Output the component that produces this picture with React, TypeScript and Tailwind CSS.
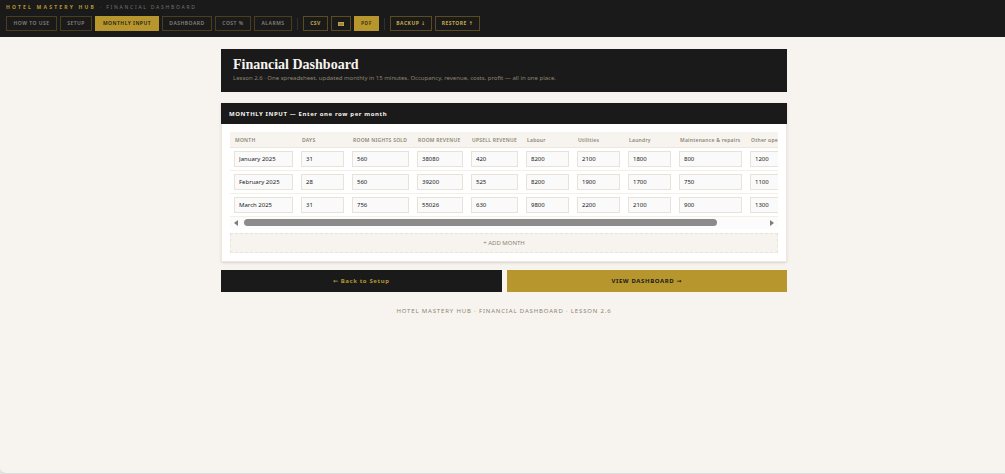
import type { ReactNode } from "react";

type NavButton = {
  label: string;
  width: string;
  active?: boolean;
};

const pages: NavButton[] = [
  { label: "HOW TO USE", width: "w-[51px]" },
  { label: "SETUP", width: "w-8" },
  { label: "MONTHLY INPUT", width: "w-16", active: true },
  { label: "DASHBOARD", width: "w-[50px]" },
  { label: "COST %", width: "w-9" },
  { label: "ALARMS", width: "w-[38px]" }
];

const columns = [
  { key: "month", label: "MONTH", width: "w-[67px]" },
  { key: "days", label: "DAYS", width: "w-[51px]" },
  { key: "nights", label: "ROOM NIGHTS SOLD", width: "w-[65px]" },
  { key: "revenue", label: "ROOM REVENUE", width: "w-[54px]" },
  { key: "upsell", label: "UPSELL REVENUE", width: "w-[55px]" },
  { key: "labour", label: "Labour", width: "w-[51px]" },
  { key: "utilities", label: "Utilities", width: "w-[51px]" },
  { key: "laundry", label: "Laundry", width: "w-[51px]" },
  { key: "maintenance", label: "Maintenance & repairs", width: "w-[71px]" },
  { key: "other", label: "Other operating", width: "w-[71px]" }
];

const rows = [
  ["January 2025", "31", "560", "38080", "420", "8200", "2100", "1800", "800", "1200"],
  ["February 2025", "28", "560", "39200", "525", "8200", "1900", "1700", "750", "1100"],
  ["March 2025", "31", "756", "55026", "630", "9800", "2200", "2100", "900", "1300"]
];

function ToolButton({
  children,
  width,
  filled,
  label
}: {
  children: ReactNode;
  width: string;
  filled?: boolean;
  label?: string;
}) {
  return (
    <button
      aria-label={label}
      className={`flex h-[15px] items-center justify-center border pt-px text-[5px] font-bold tracking-widest whitespace-nowrap ${width} ${
        filled
          ? "border-[#b8962e] bg-[#b8962e] text-[#4a3d16]"
          : "border-[#5b4c20] text-[#c5a74d]"
      }`}
      type="button"
    >
      {children}
    </button>
  );
}

function Divider() {
  return <span className="mx-0.5 h-3 w-px bg-[#303030]" />;
}

function TopBar() {
  return (
    <header className="bg-[#1a1a1a] px-1.5 pt-1 pb-1.5">
      <div className="flex h-2 items-center gap-1 text-[5px]">
        <span className="font-bold tracking-[0.44em] text-[#b8962e]">HOTEL MASTERY HUB</span>
        <span className="tracking-[0.35em] text-[#77736b]">· FINANCIAL DASHBOARD</span>
      </div>
      <nav className="mt-1 flex flex-wrap items-center gap-[3px]">
        {pages.map((page) => (
          <button
            className={`flex h-[15px] items-center justify-center border pt-px text-[5px] font-semibold tracking-widest whitespace-nowrap ${page.width} ${
              page.active
                ? "border-[#b8962e] bg-[#b8962e] text-[#1a1a1a]"
                : "border-[#4a3e1d] text-[#888377]"
            }`}
            key={page.label}
            type="button"
          >
            {page.label}
          </button>
        ))}
        <Divider />
        <ToolButton width="w-[25px]">CSV</ToolButton>
        <ToolButton label="Spreadsheet" width="w-5">
          <svg className="h-1 w-1.5" viewBox="0 0 6 4">
            <path d="M0 0h6v4H0z" fill="#c5a74d" />
            <path d="M0.5 1.3h5M0.5 2.7h5M3 1.3V4" stroke="#6b5a28" strokeWidth="0.4" />
          </svg>
        </ToolButton>
        <ToolButton filled width="w-[25px]">
          PDF
        </ToolButton>
        <Divider />
        <ToolButton width="w-[42px]">BACKUP ↓</ToolButton>
        <ToolButton width="w-[45px]">RESTORE ↑</ToolButton>
      </nav>
    </header>
  );
}

function MonthTable() {
  return (
    <div>
      <div className="overflow-x-auto [scrollbar-width:none]">
        <table className="w-[587px] table-fixed border-collapse">
          <thead>
            <tr className="h-[15px] border-b border-[#ede8de] bg-[#f7f4ef]">
              {columns.map((column) => (
                <th
                  className={`px-[5px] pt-0.5 text-left text-[5px] font-semibold tracking-wider whitespace-nowrap text-[#8c8474] ${column.width}`}
                  key={column.key}
                  scope="col"
                >
                  {column.label}
                </th>
              ))}
            </tr>
          </thead>
          <tbody>
            {rows.map((row) => (
              <tr className="h-[23px] border-b border-[#f3f0ea]" key={row[0]}>
                {row.map((value, index) => (
                  <td className="px-1" key={columns[index].key}>
                    <input
                      aria-label={`${columns[index].label}, ${row[0]}`}
                      className="block h-4 w-full border border-[#e8e3d8] bg-[#fafafa] px-1 pt-px text-[6px] text-[#1a1a1a]"
                      defaultValue={value}
                      type="text"
                    />
                  </td>
                ))}
              </tr>
            ))}
          </tbody>
        </table>
      </div>
      <div className="flex h-3 items-center justify-between bg-[#fcfcfc] px-1">
        <svg className="h-1.5 w-1" viewBox="0 0 4 6">
          <path d="M4 0v6L0 3z" fill="#7d7d7d" />
        </svg>
        <div className="mx-1.5 h-[7px] flex-1">
          <div className="h-full w-[91%] rounded-full bg-[#8b8b8b]" />
        </div>
        <svg className="h-1.5 w-1" viewBox="0 0 4 6">
          <path d="M0 0v6l4-3z" fill="#7d7d7d" />
        </svg>
      </div>
    </div>
  );
}

export default function App() {
  return (
    <div className="bg-[#e4e3e1]">
      <div className="flex min-h-screen flex-col rounded-bl-md border-b border-[#dcdcda] bg-[#f7f4ef] font-['Noto_Sans','DejaVu_Sans',sans-serif] text-[#1a1a1a]">
        <TopBar />
        <main className="w-full pt-3 pl-[3px]">
          <div className="mx-auto max-w-[566px]">
            <section className="bg-[#1a1a1a] px-3 pt-2 pb-[9px]">
              <h1 className="font-['Georgia','Liberation_Serif',serif] text-[14px] leading-4 font-bold text-[#f7f4ef]">
                Financial Dashboard
              </h1>
              <p className="text-[6px] leading-[10px] text-[#8c8474]">
                Lesson 2.6 · One spreadsheet, updated monthly in 15 minutes. Occupancy, revenue,
                costs, profit — all in one place.
              </p>
            </section>

            <section className="mt-[11px] border border-[#ede8de] bg-white shadow-sm">
              <h2 className="-mx-px -mt-px bg-[#1a1a1a] px-2 pt-0.5 text-[6px] leading-[19px] font-bold tracking-widest text-[#f7f4ef]">
                MONTHLY INPUT — Enter one row per month
              </h2>
              <div className="p-2">
                <MonthTable />
                <button
                  className="mt-1 block h-5 w-full border border-dashed border-[#e8e3d8] bg-[#f7f4ef] pt-px text-[6px] text-[#8c8474]"
                  type="button"
                >
                  + ADD MONTH
                </button>
              </div>
            </section>

            <div className="mt-2 grid grid-cols-2 gap-[5px]">
              <button
                className="py-[5px] bg-[#1a1a1a] text-[6px] leading-3 font-bold tracking-widest text-[#b8962e]"
                type="button"
              >
                ← Back to Setup
              </button>
              <button
                className="py-[5px] bg-[#b8962e] text-[6px] leading-3 font-bold tracking-widest text-[#1a1a1a]"
                type="button"
              >
                VIEW DASHBOARD →
              </button>
            </div>

            <footer className="mt-[14px] text-center text-[6px] leading-[10px] tracking-[0.14em] text-[#8c8474]">
              HOTEL MASTERY HUB · FINANCIAL DASHBOARD · LESSON 2.6
            </footer>
          </div>
        </main>
      </div>
    </div>
  );
}
